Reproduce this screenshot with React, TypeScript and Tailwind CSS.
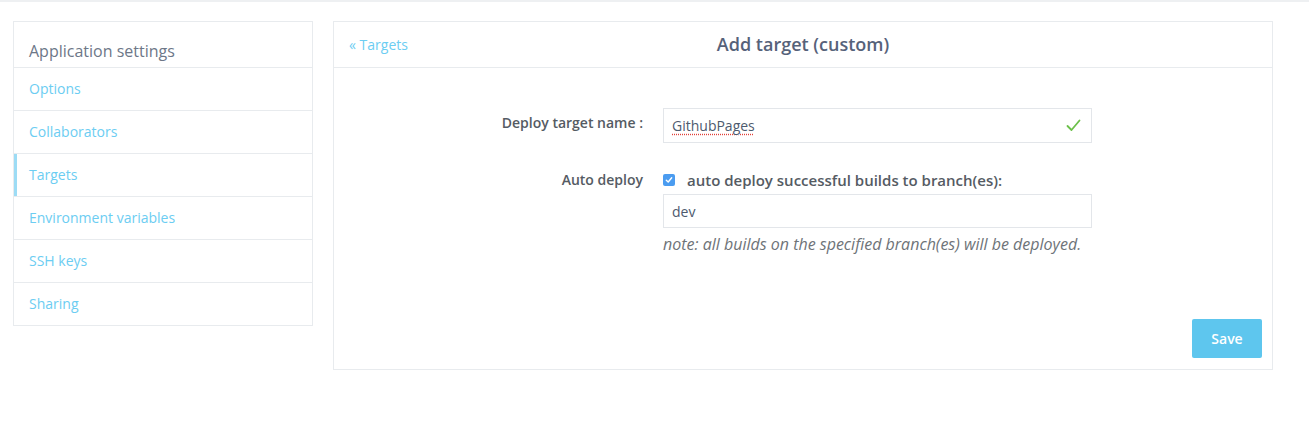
import React from "react";

const font = { fontFamily: '"Open Sans", "Liberation Sans", sans-serif' };

const items = ["Options", "Collaborators", "Targets", "Environment variables", "SSH keys", "Sharing"];

export default function App() {
  return (
    <div className="w-[1309px] h-[429px] bg-white" style={font}>
      <div className="h-[2px] bg-[#eef0f2]" />
      <div className="flex items-start gap-[20px] pl-[13px] pt-[19px]">
        {/* Sidebar */}
        <div className="w-[300px] border border-[#e8ebee] bg-white">
          <div className="pl-[15px] pt-[19px] pb-[5px] text-[16px] leading-[21px] text-[#6d7788] border-b border-[#e8ebee]">
            Application settings
          </div>
          {items.map((it, i) => (
            <div
              key={it}
              className={
                i < items.length - 1
                  ? "relative h-[43px] flex items-center pl-[15px] pb-[2px] text-[14px] text-[#6ccdf2] border-b border-[#e8ebee]"
                  : "relative h-[42px] flex items-center pl-[15px] pb-[2px] text-[14px] text-[#6ccdf2]"
              }
            >
              {it === "Targets" && <div className="absolute left-0 top-0 bottom-0 w-[3px] bg-[#9ddcf5]" />}
              {it}
            </div>
          ))}
        </div>

        {/* Main panel */}
        <div className="w-[940px] border border-[#e8ebee] bg-white">
          <div className="relative h-[46px] border-b border-[#e8ebee] flex items-center justify-center">
            <a className="absolute left-[15px] top-[12px] text-[14px] text-[#6ccdf2]">« Targets</a>
            <div className="text-[18px] font-semibold text-[#56627a]">Add target (custom)</div>
          </div>
          <div className="pt-[40px] pb-[11px] pr-[10px]">
            <div className="flex items-start">
              <div className="w-[309px] text-right pt-[5px] text-[14px] font-semibold text-[#555b63] leading-[20px]">
                Deploy target name :
              </div>
              <div className="ml-[20px] w-[429px] h-[35px] border border-[#e3e6ea] flex items-center justify-between pl-[8px] pr-[10px]">
                <span className="text-[14px] text-[#4d5a6e] underline decoration-dotted decoration-[#e0403a] underline-offset-[3px]">
                  GithubPages
                </span>
                <svg width="15" height="13" viewBox="0 0 15 13" fill="none">
                  <path d="M1.5 7 L5.5 11 L13.5 1.5" stroke="#6cc04a" strokeWidth="1.8" strokeLinecap="round" strokeLinejoin="round" />
                </svg>
              </div>
            </div>
            <div className="flex items-start mt-[26px]">
              <div className="w-[309px] text-right text-[14px] font-semibold text-[#555b63] leading-[20px] pt-[1px]">
                Auto deploy
              </div>
              <div className="ml-[20px] w-[429px]">
                <div className="flex items-center h-[22px]">
                  <span className="w-[12px] h-[12px] rounded-[2px] bg-[#4b9cf0] flex items-center justify-center">
                    <svg width="8" height="8" viewBox="0 0 8 8" fill="none">
                      <path d="M1.3 4.2 L3.2 6 L6.7 1.8" stroke="white" strokeWidth="1.4" strokeLinecap="round" strokeLinejoin="round" />
                    </svg>
                  </span>
                  <span className="ml-[12px] text-[15px] font-semibold text-[#555b63]">
                    auto deploy successful builds to branch(es):
                  </span>
                </div>
                <div className="mt-[3px] h-[34px] border border-[#e3e6ea] flex items-center pl-[8px] text-[14px] text-[#4d5a6e]">
                  dev
                </div>
                <div className="mt-[5px] text-[16px] italic text-[#6e7378] leading-[22px]">
                  note: all builds on the specified branch(es) will be deployed.
                </div>
              </div>
            </div>
            <div className="flex justify-end mt-[64px]">
              <button className="w-[70px] h-[39px] rounded-[2px] bg-[#5ec6ee] text-white text-[14px] font-semibold">
                Save
              </button>
            </div>
          </div>
        </div>
      </div>
    </div>
  );
}
